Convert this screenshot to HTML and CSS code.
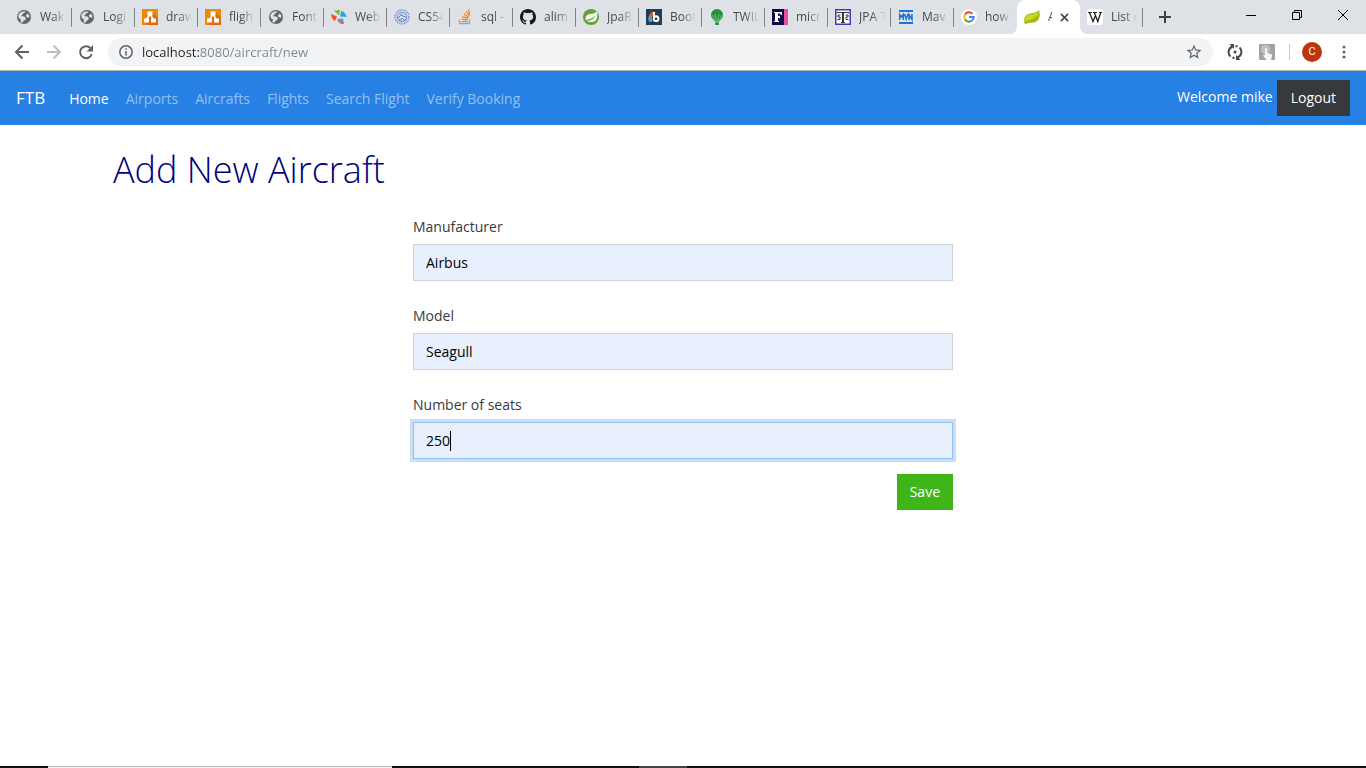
FILE: index.html
```html
<!DOCTYPE html>
<html lang="en">
<head>
<meta charset="utf-8">
<title>Add New Aircraft</title>
<link rel="stylesheet" href="styles.css">
</head>
<body>
<svg class="defs" aria-hidden="true">
  <symbol id="globe" viewBox="0 0 16 16"><circle cx="8" cy="8" r="7" fill="#5f6368"/><path d="M2.200 7c.3-2.200 1.800-4 4-4.600h3.500L8.300 4l-1.900.7.2 1.400-2 .9 3.800.5 1.600 1.800-1 1.900-1.700.6-.3 1.700c-.9.1-1.800-.1-2.600-.6l.6-2.300-1.900-1.200zM11.400 3.900l1.700 2 .5 2.300-1.500.6-1.900-1.100-.4-1.800 1.500-.5z" fill="#dee1e6"/></symbol>
  <symbol id="drawio" viewBox="0 0 16 16"><path fill="#f08705" d="M0 0h16v16H0z"/><path fill="#df6c0c" d="M10 3l6 6v7H5l-2-3 5-5z"/><path d="M8 5L4.500 11M8 5l3.500 6" stroke="#fff" stroke-width="1.500"/><path fill="#fff" d="M5.500 2.500h5v4h-5zM2 9.500h5v4H2zM9 9.500h5v4H9z"/></symbol>
</svg>

<header class="browser">
  <div class="strip">
    <div class="tabs" role="tablist">
      <button class="tab" role="tab"><svg class="fav"><use href="#globe"/></svg><span>Wak</span></button>
      <button class="tab" role="tab"><svg class="fav"><use href="#globe"/></svg><span>Logi</span></button>
      <button class="tab" role="tab"><svg class="fav"><use href="#drawio"/></svg><span>draw</span></button>
      <button class="tab" role="tab"><svg class="fav"><use href="#drawio"/></svg><span>fligh</span></button>
      <button class="tab" role="tab"><svg class="fav"><use href="#globe"/></svg><span>Font</span></button>
      <button class="tab" role="tab"><svg class="fav" viewBox="0 0 16 16"><path fill="#f4511e" d="M0 5l6 2.500-2 4.500C2 11 0 8 0 5z"/><path fill="#7cb82f" d="M3 1.500l6-.5-1 5.500z"/><path fill="#29a9e0" d="M10 2c3 0 5 3 5.500 6L9 7.500z"/><path fill="#8c8c8c" d="M6 10l6-.5 1 5.500c-3 .5-6-1-7-5z"/></svg><span>Web</span></button>
      <button class="tab" role="tab"><svg class="fav" viewBox="0 0 16 16"><circle cx="8" cy="8" r="7" fill="#c9d5ec" stroke="#7e9bd0" stroke-width="1.500" stroke-dasharray="1.500 1"/><circle cx="8" cy="8" r="4.500" fill="#dbe4f3" stroke="#6a8bc8"/><path d="M4.500 9l3-4 1 2 3 1M5 11h2l1-2 2 2h2" fill="none" stroke="#5478b8"/></svg><span>CS54</span></button>
      <button class="tab" role="tab"><svg class="fav" viewBox="0 0 16 16" fill="none"><path d="M2.500 10.500v4h10v-4" stroke="#a1a4a8" stroke-width="1.300"/><path d="M4.500 12.500h6.200M4.700 10.200l6.100.7M5.300 7.600l5.900 1.800M6.700 4.800l5.100 3.500M9 2l3.500 5M11.500.5l1.200 5" stroke="#f48024" stroke-width="1.200"/></svg><span>sql -</span></button>
      <button class="tab" role="tab"><svg class="fav" viewBox="0 0 16 16"><path fill="#191717" d="M8 0C3.580 0 0 3.580 0 8c0 3.540 2.290 6.530 5.470 7.590.4.070.55-.17.55-.38v-1.490c-2.230.48-2.690-.95-2.690-.95-.36-.92-.89-1.170-.89-1.170-.73-.5.050-.49.050-.49.810.06 1.230.83 1.230.83.720 1.230 1.880.87 2.340.67.070-.52.280-.88.510-1.080-1.780-.2-3.640-.89-3.640-3.950 0-.87.310-1.590.82-2.150-.08-.2-.36-1.020.08-2.120 0 0 .67-.21 2.200.82a7.600 7.600 0 0 1 4 0c1.530-1.040 2.200-.82 2.200-.82.440 1.100.16 1.920.08 2.120.51.560.82 1.270.82 2.150 0 3.070-1.870 3.750-3.650 3.950.29.250.54.730.54 1.480v2.200c0 .21.150.46.550.38A8 8 0 0 0 16 8c0-4.420-3.580-8-8-8z"/></svg><span>alim</span></button>
      <button class="tab" role="tab"><svg class="fav" viewBox="0 0 16 16"><circle cx="8" cy="8" r="8" fill="#5fa134"/><path fill="#f1f6ec" d="M14 2c.8 4 .9 10-4.500 11-2.500.4-4.600 0-6-1 4.500-.2 7.500-2 9-5.500-2.500 2.800-5.500 4-10 4.500C1.800 7 4.500 5 8 4.700c3-.2 4.700-.9 6-2.700z"/></svg><span>JpaR</span></button>
      <button class="tab" role="tab"><svg class="fav" viewBox="0 0 16 16"><path fill="#263a52" d="M0 0h16v16H0z"/><path fill="#f27c2c" d="M6 2L2.500 8 5 10z"/><path fill="#35a8e0" d="M2 9l4-2v6H3z"/><path fill="#e94b35" d="M5 4l2-2v7z"/><path fill="#fff" d="M7 3h2v3.500c2.500-.8 4.500.8 4.500 3.200S11.500 13.500 9.500 13 6 12 7 9z"/><circle cx="10" cy="9.800" r="1.300" fill="#263a52"/></svg><span>Boot</span></button>
      <button class="tab" role="tab"><svg class="fav" viewBox="0 0 16 16"><path fill="#259239" d="M8 0a6 6 0 0 1 6 6c0 2.500-2 4-4 6.500H6C4 10 2 8.500 2 6a6 6 0 0 1 6-6zM6.200 13.200h3.600V16H6.200z"/><path d="M3 6l3.500 6M6 5l1.500 7M10 5l-1.500 7M13 6l-3.500 6" stroke="#8cc79a" stroke-width=".7" fill="none"/></svg><span>TWIL</span></button>
      <button class="tab" role="tab"><svg class="fav" viewBox="0 0 16 16"><path fill="#0c0c46" d="M0 0h12v16H0z"/><path fill="#ec4fa0" d="M12 0h4v16h-4z"/><path fill="#fff" d="M2 3h8v3H9L8 4.500H6V7h1.500l.5-1v4l-.5-1H6v3h1v1H2v-1h1V4H2z"/></svg><span>micr</span></button>
      <button class="tab" role="tab"><svg class="fav" viewBox="0 0 16 16" fill="none"><path fill="#fff" stroke="#4834b8" stroke-width="1.500" d="M.75.75h14.500v14.500H.75z"/><path stroke="#333" d="M2 4.500V3.500h12v1M6 13.500h4M5.500 6H3v2h2v2.500H2.500M10.500 6H13v2h-2v2.500h2.500"/><path stroke="#333" stroke-width="2" d="M8 3v10"/></svg><span>JPA T</span></button>
      <button class="tab" role="tab"><svg class="fav" viewBox="0 0 16 16" fill="none" stroke="#1976d2"><path stroke-width="2" d="M1 2h14M1 14h14"/><path stroke-width="1.500" d="M1.700 11V5.500L3.500 8l1.800-2.500V11M6.500 5l1.700 5 1.700-5M11 11V5.500l3 5V5"/></svg><span>Mav</span></button>
      <button class="tab tab-last" role="tab"><svg class="fav" viewBox="0 0 16 16" fill="none" stroke-width="2"><circle cx="8" cy="8" r="8" fill="#fff"/><path stroke="#ea4335" d="M4 5.600A4.700 4.700 0 0 1 11.400 4.700"/><path stroke="#fbbc05" d="M4 5.600a4.700 4.700 0 0 0 0 4.800"/><path stroke="#34a853" d="M4 10.400a4.700 4.700 0 0 0 7 1.200"/><path stroke="#4285f4" d="M8 8h4.700a4.700 4.700 0 0 1-1.700 3.600"/></svg><span>how</span></button>
      <button class="tab tab-active" role="tab" aria-selected="true"><svg class="fav" viewBox="0 0 16 16"><path fill="#a8ba12" d="M15 1c1.500 5 1 11-5 12.500-3.500.7-6 .3-7.500 1.500L.500 14.500C-.5 9 1 5.500 6 4.500c4-.7 7-1 9-3.500z"/><path fill="#c5d92d" d="M14.500 3c0 4-5 7.500-13 9C1 8 2.500 6 6.500 5.300c4-.6 6-.8 8-2.300z"/></svg><span>A</span><svg class="close" viewBox="0 0 10 10"><path d="M1 1l8 8M9 1L1 9" stroke="#45494d" stroke-width="1.800"/></svg></button>
      <button class="tab" role="tab"><svg class="fav" viewBox="0 0 16 16"><rect width="16" height="16" rx="3" fill="#fff"/><path d="M1 3.500h4M6 3.500h4M12 3.500h3" stroke="#222"/><path d="M2.500 3.500l3.500 9 2.500-6M7.300 3.500l3.500 9 3-9" stroke="#222" stroke-width="1.300" fill="none"/></svg><span>List o</span></button>
    </div>
    <button class="plus" aria-label="New tab"><svg viewBox="0 0 12 12"><path d="M6 0v12M0 6h12" stroke="#3c4043" stroke-width="2"/></svg></button>
    <div class="window-controls">
      <button aria-label="Minimize"><svg viewBox="0 0 10 10"><path d="M0 5.500h10" stroke="#000"/></svg></button>
      <button aria-label="Restore"><svg viewBox="0 0 10 10" fill="none" stroke="#000"><path d="M.5 2.500h7v7h-7zM2.500 2.500v-2h7v7h-2"/></svg></button>
      <button aria-label="Close"><svg viewBox="0 0 10 10"><path d="M0 0l10 10M10 0L0 10" stroke="#000"/></svg></button>
    </div>
  </div>
  <div class="toolbar">
    <button class="tool" aria-label="Back"><svg viewBox="0 0 16 16" fill="none" stroke="#5f6368" stroke-width="2"><path d="M15 8H2M8.500 1.500L2 8l6.500 6.500"/></svg></button>
    <button class="tool" aria-label="Forward"><svg viewBox="0 0 16 16" fill="none" stroke="#bcbec1" stroke-width="2"><path d="M1 8h13M7.500 1.500L14 8l-6.500 6.500"/></svg></button>
    <button class="tool" aria-label="Reload"><svg viewBox="0 0 16 16"><path d="M12.600 4.200A6 6 0 1 0 13.800 10" fill="none" stroke="#5f6368" stroke-width="2"/><path fill="#5f6368" d="M15 1v6.500H8.500z"/></svg></button>
    <div class="omnibox">
      <svg viewBox="0 0 14 14" fill="none" stroke="#5f6368" stroke-width="1.500"><circle cx="7" cy="7" r="6.200"/><path d="M7 6v4.500M7 3.300v1.500"/></svg>
      <input class="url" type="text" aria-label="Address" value="localhost:8080/aircraft/new">
      <button class="star" aria-label="Bookmark"><svg viewBox="0 0 24 24" fill="#5f6368"><path d="M22 9.240l-7.190-.62L12 2 9.190 8.630 2 9.240l5.460 4.730L5.820 21 12 17.270 18.180 21l-1.630-7.030L22 9.240zM12 15.400l-3.760 2.270 1-4.280-3.320-2.880 4.380-.38L12 6.100l1.710 4.040 4.380.38-3.320 2.880 1 4.280L12 15.400z"/></svg></button>
    </div>
    <div class="extensions">
      <button class="tool" aria-label="Sync extension"><svg viewBox="0 0 16 16" fill="none" stroke="#45494d" stroke-width="2"><path d="M3.500 12.500A6 6 0 0 1 5.500 2.500M12.500 3.500a6 6 0 0 1-2 10M8.500 2a6 6 0 0 1 2 .5M7.500 14a6 6 0 0 1-2-.5"/><path fill="#45494d" stroke="none" d="M2.500 0H7v5zM13.500 16H9v-5z"/><circle cx="8" cy="8" r="1.500" fill="#45494d" stroke="none"/></svg></button>
      <button class="tool" aria-label="Touch extension"><svg viewBox="0 0 16 16"><rect width="16" height="16" rx="1" fill="#a3a3a3"/><circle cx="6.500" cy="5.500" r="4" fill="#bdbdbd" stroke="#cfcfcf"/><path fill="#f3f6fa" d="M6 4.500q1-1 2 0V9l4 1q1.500.5 1 2.500l-1 3.500H7.500L4 11.500q1-1.500 2 0z"/></svg></button>
      <span class="divider"></span>
      <button class="avatar" aria-label="Profile">C</button>
      <button class="tool" aria-label="Menu"><svg viewBox="0 0 16 16" fill="#5f6368"><circle cx="8" cy="3" r="1.500"/><circle cx="8" cy="8" r="1.500"/><circle cx="8" cy="13" r="1.500"/></svg></button>
    </div>
  </div>
</header>

<nav class="navbar">
  <a class="brand" href="#">FTB</a>
  <ul class="links">
    <li><a class="current" href="#">Home</a></li>
    <li><a href="#">Airports</a></li>
    <li><a href="#">Aircrafts</a></li>
    <li><a href="#">Flights</a></li>
    <li><a href="#">Search Flight</a></li>
    <li><a href="#">Verify Booking</a></li>
  </ul>
  <span class="welcome">Welcome mike</span>
  <button class="btn btn-dark">Logout</button>
</nav>

<main class="container">
  <h1>Add New Aircraft</h1>
  <form class="form">
    <div class="group">
      <label for="manufacturer">Manufacturer</label>
      <input class="control" id="manufacturer" type="text" value="Airbus">
    </div>
    <div class="group">
      <label for="model">Model</label>
      <input class="control" id="model" type="text" value="Seagull">
    </div>
    <div class="group group-seats">
      <label for="seats">Number of seats</label>
      <div class="field">
        <input class="control control-focus" id="seats" type="text" inputmode="numeric" value="250">
        <span class="caret"></span>
      </div>
    </div>
    <button class="btn btn-save" type="button">Save</button>
  </form>
</main>

<footer class="taskbar"><span class="task-search"></span><span class="task-gap"></span><span class="task-open"></span></footer>
</body>
</html>
```

FILE: styles.css
```css
* { box-sizing: border-box; }

body {
  margin: 0;
  min-height: 100vh;
  display: flex;
  flex-direction: column;
  background: #fff;
  color: #373a3c;
  font: 14px/22px "Open Sans", "Noto Sans", sans-serif;
}

button {
  border: 0;
  padding: 0;
  background: none;
  font: inherit;
  color: inherit;
}

a { color: inherit; text-decoration: none; }
svg { flex: none; display: block; }
.defs { display: none; }

/* Browser frame */
.browser { border-bottom: 1px solid #b3b3b3; }

.strip {
  display: flex;
  height: 34px;
  padding-left: 9px;
  background: #dee1e6;
}

.tabs { display: flex; }

.tab {
  position: relative;
  display: flex;
  align-items: center;
  gap: 8px;
  width: 63px;
  padding: 0 2px 0 7px;
  font-size: 12px;
  color: #45494d;
}

.tab::after {
  content: "";
  position: absolute;
  right: 0;
  top: 8px;
  width: 1px;
  height: 19px;
  background: #808387;
}

.tab span {
  flex: 1;
  overflow: hidden;
  text-align: left;
  white-space: nowrap;
  -webkit-mask-image: linear-gradient(to right, #000 12px, transparent 26px);
  mask-image: linear-gradient(to right, #000 12px, transparent 26px);
}

.fav { width: 16px; height: 16px; }

.tab-active {
  background: #fff;
  border-radius: 8px 8px 0 0;
}

/* Curved feet where the active tab meets the toolbar */
.tab-active::before,
.tab-active::after {
  content: "";
  position: absolute;
  top: auto;
  bottom: 0;
  width: 8px;
  height: 8px;
  background: radial-gradient(circle at 0 0, transparent 8px, #fff 8px);
}

.tab-active::before { right: 100%; }

.tab-active::after {
  left: 100%;
  right: auto;
  background: radial-gradient(circle at 100% 0, transparent 8px, #fff 8px);
}

.tab-active span {
  flex: 0 0 4px;
  -webkit-mask-image: none;
  mask-image: none;
}

.close { width: 9px; height: 9px; }
.tab-last::after { display: none; }

.plus { display: flex; align-items: center; padding-left: 16px; }
.plus svg { width: 12px; height: 12px; }

.window-controls { display: flex; margin-left: auto; }

.window-controls button {
  display: flex;
  justify-content: center;
  align-items: center;
  width: 46px;
  height: 29px;
}

.window-controls svg { width: 10px; height: 10px; }

.toolbar {
  display: flex;
  align-items: center;
  height: 36px;
  padding: 0 14px;
}

.tool { margin-right: 16px; }
.tool svg { width: 16px; height: 16px; }
.tool:last-child { margin-right: 0; }

.omnibox {
  flex: 1;
  display: flex;
  align-items: center;
  gap: 9px;
  height: 28px;
  margin-right: 14px;
  margin-left: -2px;
  padding: 0 10px 0 11px;
  border-radius: 14px;
  background: #f1f3f4;
}

.omnibox > svg { width: 14px; height: 14px; }

.url {
  flex: 1;
  min-width: 0;
  border: 0;
  padding: 0;
  outline: 0;
  font: 13px/20px "Open Sans", "Noto Sans", sans-serif;
  color: transparent;
  background: linear-gradient(to right, #202124 57px, #80868b 57px);
  -webkit-background-clip: text;
  background-clip: text;
}

.star svg { width: 18px; height: 18px; }

.extensions { display: flex; align-items: center; }
.divider { width: 1px; height: 16px; margin-right: 12px; background: #c8cacd; }
.extensions .tool + .divider { margin-left: -2px; }

.avatar {
  width: 20px;
  height: 20px;
  margin-right: 14px;
  border-radius: 50%;
  background: #bf360c;
  color: #fff;
  font: 11px/20px Roboto, sans-serif;
}

/* Site navigation */
.navbar {
  display: flex;
  align-items: center;
  height: 54px;
  padding: 0 16px;
  background: #2780e3;
  color: #fff;
}

.brand { margin-right: 24px; font-size: 17px; }

.links {
  display: flex;
  gap: 17px;
  margin: 0;
  padding: 2px 0 0;
  list-style: none;
  color: #93c0f1;
}

.current { color: #fff; }

.welcome { margin-left: auto; margin-right: 4px; padding-bottom: 2px; }

.btn {
  height: 36px;
  padding: 0 13px;
  color: #fff;
}

.btn-dark { padding: 0 14px; background: #373a3c; }
.btn-save { background: #3fb618; }

/* Form page */
.container {
  flex: 1;
  width: 100%;
  max-width: 1140px;
  margin: 0 auto;
}

h1 {
  margin: 21px 0 22px;
  font-size: 36px;
  line-height: 48px;
  font-weight: 300;
  color: #000080;
}

.form {
  display: flex;
  flex-direction: column;
  align-items: flex-end;
  width: 50%;
  margin: 0 auto;
  padding: 0 15px;
}

.group { width: 100%; margin-bottom: 24px; }
.group-seats { margin-bottom: 15px; }

.group label { display: block; margin-bottom: 6px; }

.control {
  display: block;
  width: 100%;
  height: 37px;
  padding: 0 12px;
  border: 1px solid #ced4da;
  outline: 0;
  background: #e8f0fe;
  color: #000;
  font: inherit;
}

.control-focus {
  border-color: #95c0f1;
  box-shadow: 0 0 0 3px #c9dff8;
}

.field { position: relative; }

.caret {
  position: absolute;
  left: 37px;
  top: 9px;
  width: 1px;
  height: 20px;
  background: #000;
}

/* Top edge of the desktop taskbar */
.taskbar { display: flex; height: 2px; padding-left: 48px; background: #111; }
.task-search { width: 344px; background: #f3f3f3; border-top: 1px solid #bbb; }
.task-gap { width: 247px; }
.task-open { width: 48px; background: #444; }
```
